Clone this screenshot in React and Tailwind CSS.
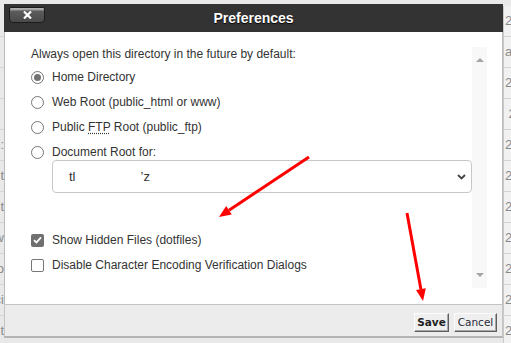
import React from "react";

const rows = [
  { left: "", right: "2" },
  { left: "", right: "ay" },
  { left: "", right: "20" },
  { left: "", right: " 2" },
  { left: "n:", right: "20" },
  { left: "t", right: "20" },
  { left: "t", right: "20" },
  { left: "w", right: "20" },
  { left: "o", right: "20" },
  { left: "ci", right: "20" },
  { left: "t", right: "20" },
];

function Radio({ checked }) {
  return (
    <span className="w-[13px] h-[13px] shrink-0 rounded-full border border-[#767676] bg-white flex items-center justify-center">
      {checked && <span className="w-[7px] h-[7px] rounded-full bg-[#747474]" />}
    </span>
  );
}

function Checkbox({ checked }) {
  if (checked) {
    return (
      <span className="w-[13px] h-[13px] shrink-0 rounded-[2px] bg-[#707070] flex items-center justify-center">
        <svg width="9" height="8" viewBox="0 0 9 8">
          <path d="M1 4.2 L3.4 6.5 L8 1.3" fill="none" stroke="#fff" strokeWidth="1.8" />
        </svg>
      </span>
    );
  }
  return <span className="w-[13px] h-[13px] shrink-0 rounded-[2px] border border-[#767676] bg-white" />;
}

export default function App() {
  return (
    <div className="relative w-[511px] h-[343px] overflow-hidden bg-[#e9e9e9] font-['Liberation_Sans',Arial,sans-serif]">
      {/* page behind the dialog */}
      <div className="flex flex-col pt-[6px]">
        {rows.map((r, i) => (
          <div key={i} className="h-[31px] flex items-center justify-between border-b border-[#d4d4d4] text-[13px] text-[#8a8a8a]">
            <div className="w-[4px] overflow-hidden flex justify-end">
              <span className="shrink-0 whitespace-pre">{r.left}</span>
            </div>
            <div className="w-[8px] h-full overflow-hidden bg-[#f1f1f1] border-l border-[#c8c8c8] flex items-center">
              <span className="shrink-0 whitespace-pre pl-[1px]">{r.right}</span>
            </div>
          </div>
        ))}
      </div>

      {/* dialog */}
      <div className="absolute left-[4px] top-[4px] w-[499px] flex flex-col border-b-2 border-[#b4b4b4]">
        <div className="relative h-[28px] bg-[#333333] flex items-center justify-center">
          <button className="absolute left-[5px] top-[3px] w-[36px] h-[16px] rounded-b-[4px] rounded-t-[2px] border border-[#1c1c1c] bg-[linear-gradient(#b4b4b4_0,#9a9a9a_2px,#5c5c5c_3px,#4a4a4a_100%)] flex items-center justify-center">
            <svg width="9" height="8" viewBox="0 0 9 8">
              <path d="M1 0.5 L8 7.5 M8 0.5 L1 7.5" stroke="#fff" strokeWidth="2.2" />
            </svg>
          </button>
          <span className="text-[14px] font-bold text-white [text-shadow:0_1px_1px_#000]">Preferences</span>
        </div>

        <div className="h-[272px] bg-white border-x border-[#bcbcbc] pt-[15px] pl-[15px] pr-[15px]">
          <div className="h-[241px] flex">
            <div className="flex-1 pl-[11px] text-[12px] text-[#333] leading-[16px]">
              <p className="leading-[14px]">Always open this directory in the future by default:</p>
              <div className="mt-[8px] flex flex-col gap-[9px]">
                <label className="flex items-center gap-[8px] h-[16px]">
                  <Radio checked />
                  <span>Home Directory</span>
                </label>
                <label className="flex items-center gap-[8px] h-[16px]">
                  <Radio />
                  <span>Web Root (public_html or www)</span>
                </label>
                <label className="flex items-center gap-[8px] h-[16px]">
                  <Radio />
                  <span>
                    Public <abbr className="underline decoration-dotted underline-offset-2">FTP</abbr> Root (public_ftp)
                  </span>
                </label>
                <label className="flex items-center gap-[8px] h-[16px]">
                  <Radio />
                  <span>Document Root for:</span>
                </label>
              </div>
              <div className="ml-[21px] h-[33px] border border-[#c8c8c8] rounded-[4px] flex items-center justify-between pl-[16px] pr-[5px] text-[13px]">
                <span className="flex">
                  <span>tl</span>
                  <span className="inline-block w-[65px]" />
                  <span>’z</span>
                </span>
                <svg width="9" height="6" viewBox="0 0 9 6">
                  <path d="M1 1 L4.5 4.5 L8 1" fill="none" stroke="#444" strokeWidth="1.8" />
                </svg>
              </div>
              <label className="mt-[39px] flex items-center gap-[8px] h-[16px]">
                <Checkbox checked />
                <span>Show Hidden Files (dotfiles)</span>
              </label>
              <label className="mt-[9px] flex items-center gap-[8px] h-[16px]">
                <Checkbox />
                <span>Disable Character Encoding Verification Dialogs</span>
              </label>
            </div>
            <div className="w-[15px] bg-[#f8f8f8] flex flex-col justify-between items-center py-[11px]">
              <span className="w-0 h-0 border-x-[4px] border-x-transparent border-b-[4px] border-b-[#a3a3a3]" />
              <span className="w-0 h-0 border-x-[4px] border-x-transparent border-t-[4px] border-t-[#a3a3a3]" />
            </div>
          </div>
        </div>

        <div className="h-[32px] bg-[#ececec] border-x border-t border-[#c4c4c4] flex justify-end items-start pt-[8px] pr-[5px] gap-[5px] font-['DejaVu_Sans',Verdana,sans-serif] text-[10.5px]">
          <button className="w-[35px] h-[19px] bg-[#efefef] border border-t-[#fdfdfd] border-l-[#fdfdfd] border-r-[#5e5e5e] border-b-[#5e5e5e] shadow-[inset_-1px_-1px_0_#a8a8a8] font-bold text-[#222] leading-none">
            Save
          </button>
          <button className="w-[43px] h-[19px] bg-[#efefef] border border-t-[#fdfdfd] border-l-[#fdfdfd] border-r-[#5e5e5e] border-b-[#5e5e5e] shadow-[inset_-1px_-1px_0_#a8a8a8] text-[#2a2a3a] leading-none">
            Cancel
          </button>
        </div>
      </div>

      {/* red annotation arrows */}
      <svg className="absolute inset-0 pointer-events-none" width="511" height="343" viewBox="0 0 511 343">
        <line x1="309" y1="157" x2="229" y2="210.3" stroke="#f00" strokeWidth="3" />
        <polygon points="219,217 231.8,214.5 226.2,206.1" fill="#f00" />
        <line x1="407" y1="213" x2="420.9" y2="289.2" stroke="#f00" strokeWidth="3" />
        <polygon points="423,301 425.8,288.3 416,290.1" fill="#f00" />
      </svg>
    </div>
  );
}
